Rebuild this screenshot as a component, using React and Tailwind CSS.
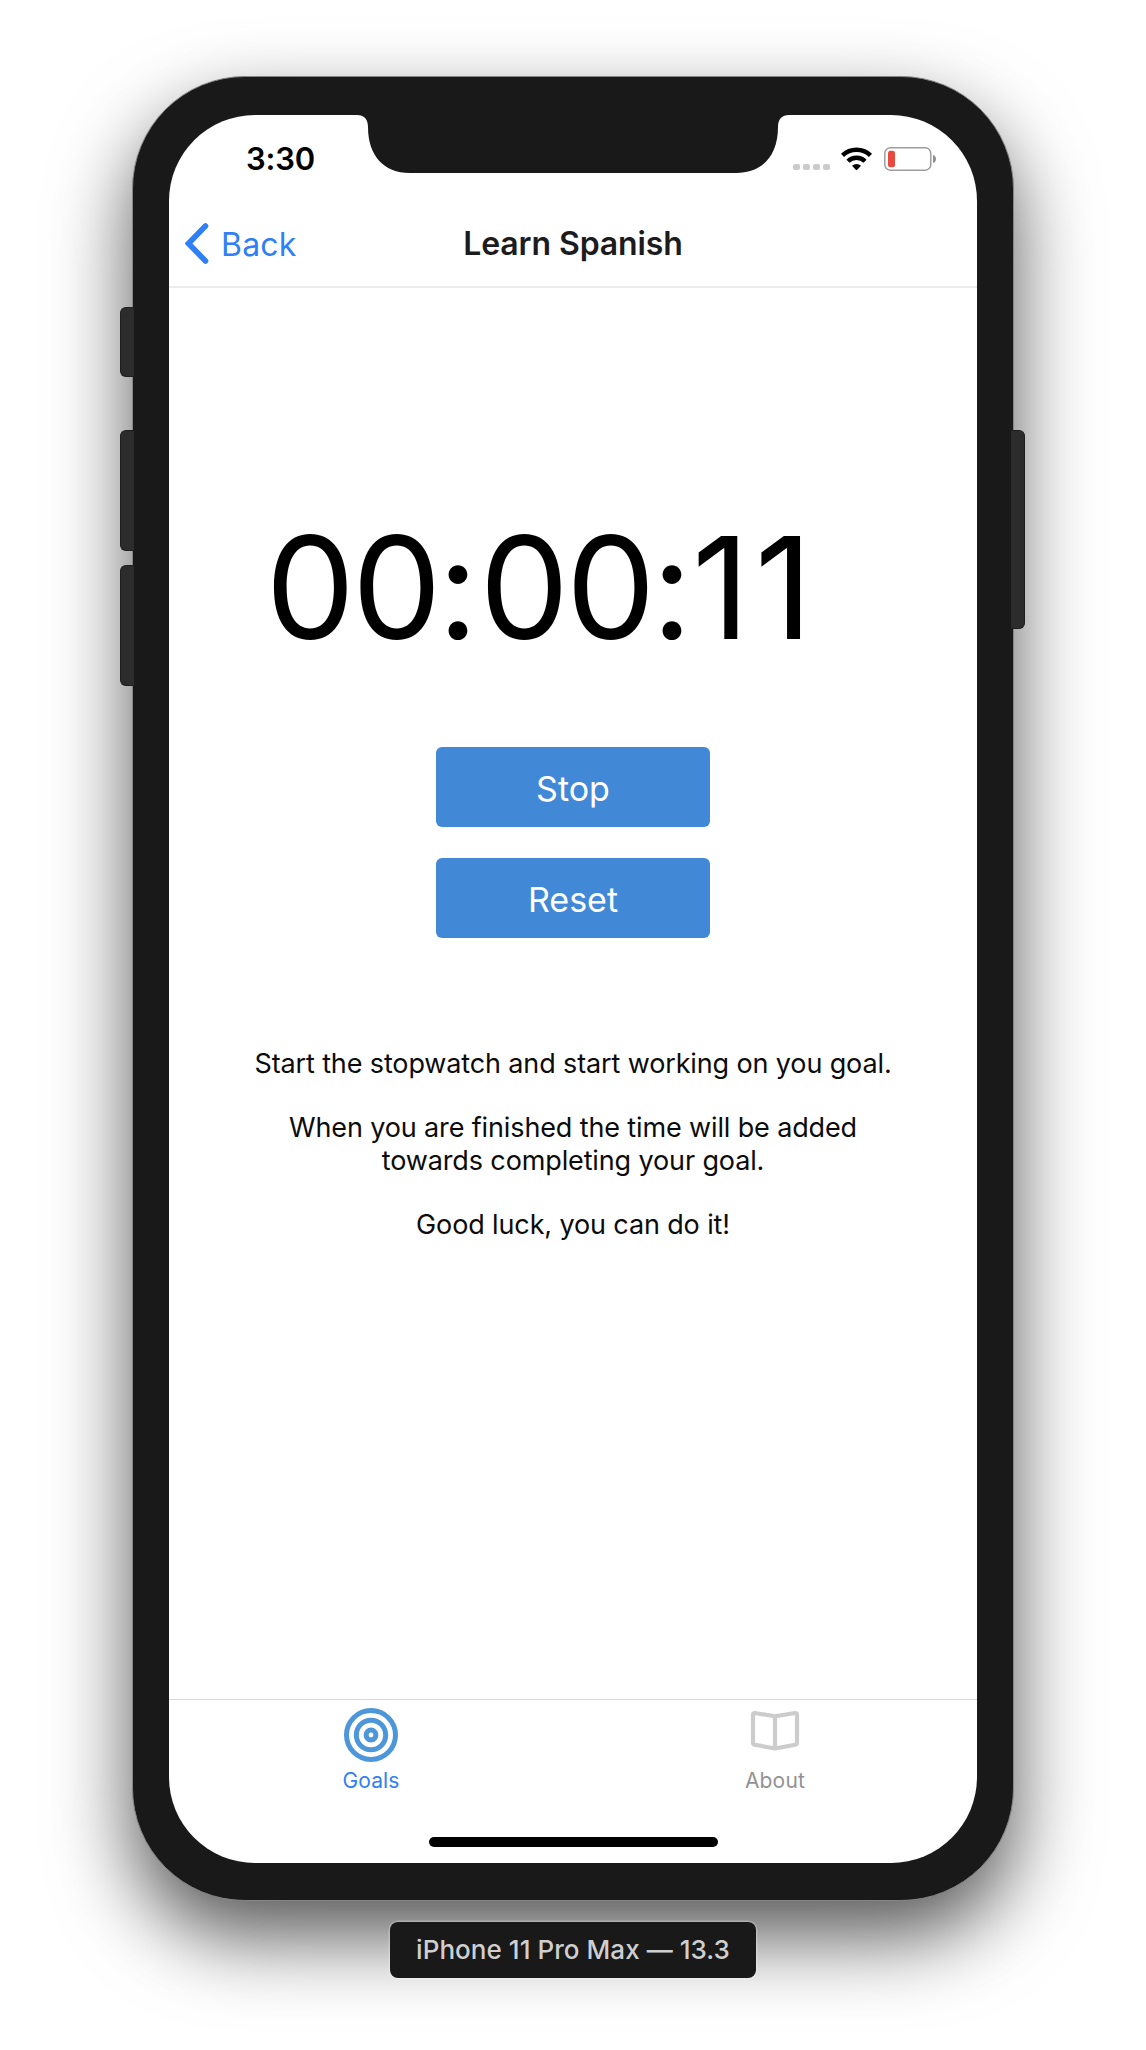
import React from "react";

function SideButtons() {
  return (
    <>
      <span className="absolute -left-[12px] top-[231px] h-[70px] w-[14px] rounded-l-[6px] border border-r-0 border-[#1e1e1e] bg-[#2c2c2c]" />
      <span className="absolute -left-[12px] top-[354px] h-[121px] w-[14px] rounded-l-[6px] border border-r-0 border-[#1e1e1e] bg-[#2c2c2c]" />
      <span className="absolute -left-[12px] top-[489px] h-[121px] w-[14px] rounded-l-[6px] border border-r-0 border-[#1e1e1e] bg-[#2c2c2c]" />
      <span className="absolute -right-[11px] top-[354px] h-[199px] w-[14px] rounded-r-[6px] border border-l-0 border-[#1e1e1e] bg-[#2c2c2c]" />
    </>
  );
}

function Notch() {
  return (
    <svg className="absolute left-[188px] -top-px" width="432" height="60" viewBox="0 0 432 60">
      <path
        d="M0 0V1C7 1 11 5 11 13C11 41 26 59 53 59H379C406 59 421 41 421 13C421 5 425 1 432 1V0Z"
        fill="#191919"
      />
    </svg>
  );
}

function StatusBar() {
  return (
    <div className="relative flex h-[90px] shrink-0 items-start justify-between pr-[41px] pl-[77px]">
      <Notch />
      <span className="mt-[24px] text-[31px] leading-[40px] font-semibold tracking-[-0.2px] text-black">3:30</span>
      <div className="mt-[32px] flex h-[24px] items-start">
        <div className="mt-[17px] flex gap-[3px]">
          <i className="h-[6px] w-[7px] rounded-[2px] bg-[#cbcbcb]" />
          <i className="h-[6px] w-[7px] rounded-[2px] bg-[#cbcbcb]" />
          <i className="h-[6px] w-[7px] rounded-[2px] bg-[#cbcbcb]" />
          <i className="h-[6px] w-[7px] rounded-[2px] bg-[#cbcbcb]" />
        </div>
        <svg className="ml-[11px]" width="31" height="24" viewBox="0 0 31 24">
          <g fill="none" stroke="#000" strokeWidth="4.4">
            <path d="M1.500 8.400A20 20 0 0 1 29.500 8.400" />
            <path d="M7 14.300A12 12 0 0 1 24 14.300" />
          </g>
          <path d="M11 18.800A6.800 6.800 0 0 1 20 18.800L16.200 22.800Q15.500 23.500 14.800 22.800Z" fill="#000" />
        </svg>
        <svg className="ml-[12px]" width="52" height="24" viewBox="0 0 52 24">
          <rect x="0.8" y="0.8" width="46" height="22.400" rx="5.500" fill="none" stroke="#9d9d9d" strokeWidth="1.500" />
          <rect x="4" y="3.800" width="7" height="16.500" rx="2.500" fill="#ea4a3e" />
          <path d="M49 8C53 9 53 15 49 16Z" fill="#8f8f8f" />
        </svg>
      </div>
    </div>
  );
}

function NavBar() {
  return (
    <header className="relative flex h-[83px] shrink-0 items-start border-b-2 border-[#ececec] pl-[16px]">
      <svg className="mt-[18px]" width="24" height="41" viewBox="0 0 24 41">
        <path d="M20.500 3L3.500 20.500L20.500 38" fill="none" stroke="#2f7ff7" strokeWidth="5.600" strokeLinecap="round" />
      </svg>
      <span className="mt-[20px] ml-[12px] text-[32px] leading-[40px] tracking-[0.2px] text-[#2f7ff7]">Back</span>
      <h1 className="absolute inset-x-0 top-[19px] text-center text-[32px] leading-[40px] font-semibold tracking-[-0.1px] text-[#1c1c1e]">
        Learn Spanish
      </h1>
    </header>
  );
}

function Pair({ children }) {
  return (
    <span className="flex w-[176px] justify-center pl-[2px]">
      <span className="tracking-[-3px]">{children}</span>
    </span>
  );
}

function Colon() {
  return <span className="flex w-[38px] justify-center">:</span>;
}

function Stopwatch() {
  return (
    <div className="mt-[204px] h-[190px] w-full pl-[94px]">
      <div className="flex h-[190px] items-center text-[142px] leading-[190px] whitespace-nowrap text-black">
        <Pair>00</Pair>
        <Colon />
        <Pair>00</Pair>
        <Colon />
        <span className="pl-[1px] tracking-[5px]">11</span>
      </div>
    </div>
  );
}

function Button({ children }) {
  return (
    <button className="flex h-[80px] w-[274px] items-center justify-center rounded-[6px] bg-[#4189d7] pt-[2px] text-[34px] font-normal text-white">
      {children}
    </button>
  );
}

function TabBar() {
  return (
    <nav className="flex h-[164px] shrink-0 flex-col border-t border-[#d9d9d9]">
      <div className="flex">
        <div className="flex w-1/2 flex-col items-center pt-[8px]">
          <svg width="54" height="54" viewBox="0 0 54 54" fill="none" stroke="#4c96d9" strokeWidth="5">
            <circle cx="27" cy="27" r="24.500" />
            <circle cx="27" cy="27" r="14.700" />
            <circle cx="27" cy="27" r="4.900" />
          </svg>
          <span className="mt-[6px] text-[21px] leading-[26px] tracking-[0.1px] text-[#2f7ff7]">Goals</span>
        </div>
        <div className="flex w-1/2 flex-col items-center pt-[8px]">
          <svg width="54" height="54" viewBox="0 0 54 54" fill="none" stroke="#ccc" strokeWidth="4.200" strokeLinejoin="round">
            <path d="M27 8.300L6.800 5Q5 5 5 7V34.500Q5 36.300 6.800 36.800L27 40.500L47.200 36.800Q49 36.300 49 34.500V7Q49 5 47.200 5Z" />
            <path d="M27 8.300V40.500" />
          </svg>
          <span className="mt-[6px] text-[21px] leading-[26px] tracking-[0.2px] text-[#929292]">About</span>
        </div>
      </div>
      <div className="mt-[43px] h-[10px] w-[289px] self-center rounded-full bg-black" />
    </nav>
  );
}

export default function App() {
  return (
    <div className="flex h-[2050px] w-[1146px] flex-col items-center overflow-hidden bg-white pt-[76px] font-['Inter',sans-serif]">
      <div className="relative h-[1825px] w-[882px] shrink-0">
        <div className="relative flex h-full w-full rounded-[113px] border border-[#858585] bg-[#191919] pt-[38px] pr-[36px] pb-[37px] pl-[36px] shadow-[0_36px_80px_rgba(0,0,0,0.66)]">
          <main className="relative flex w-full flex-col overflow-hidden rounded-[86px] bg-white">
            <StatusBar />
            <NavBar />
            <section className="flex flex-1 flex-col items-center">
              <Stopwatch />
              <div className="mt-[65px] flex flex-col gap-[31px]">
                <Button>Stop</Button>
                <Button>Reset</Button>
              </div>
              <div className="mt-[109px] flex flex-col gap-[31px] text-center text-[27px] leading-[33px] tracking-[-0.13px] text-[#0c0c0c]">
                <p>Start the stopwatch and start working on you goal.</p>
                <p>
                  When you are finished the time will be added
                  <br />
                  towards completing your goal.
                </p>
                <p>Good luck, you can do it!</p>
              </div>
            </section>
            <TabBar />
          </main>
        </div>
        <SideButtons />
      </div>
      <div className="relative mt-[21px] flex h-[56px] w-[366px] shrink-0 items-center justify-center rounded-[8px] bg-[#191919] pb-px text-[26px] font-medium tracking-[0.05px] whitespace-nowrap text-[#cfcfcf] shadow-[0_0_0_1.500px_rgba(255,255,255,0.25)]">
        iPhone 11 Pro Max — 13.3
      </div>
    </div>
  );
}
